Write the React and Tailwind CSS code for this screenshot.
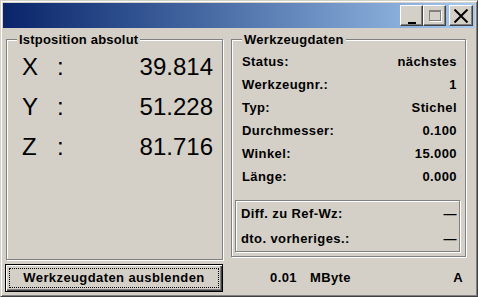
import React from "react";

const sans = "font-['Liberation_Sans',Arial,sans-serif]";

const achsen = [
  { name: "X", wert: "39.814" },
  { name: "Y", wert: "51.228" },
  { name: "Z", wert: "81.716" },
];

const werkzeug = [
  { label: "Status:", wert: "nächstes" },
  { label: "Werkzeugnr.:", wert: "1" },
  { label: "Typ:", wert: "Stichel" },
  { label: "Durchmesser:", wert: "0.100" },
  { label: "Winkel:", wert: "15.000" },
  { label: "Länge:", wert: "0.000" },
];

function TitleButton({ children, className = "" }) {
  return (
    <div
      className={`w-[23px] h-[21px] bg-[#d4d0c8] border border-t-white border-l-white border-r-[#404040] border-b-[#404040] shadow-[inset_-1px_-1px_0_#808080] flex items-center justify-center ${className}`}
    >
      {children}
    </div>
  );
}

export default function App() {
  return (
    <div
      className={`${sans} w-[478px] h-[297px] bg-[#d4d0c8] border border-t-[#d4d0c8] border-l-[#d4d0c8] border-r-[#404040] border-b-[#404040] shadow-[inset_1px_1px_0_#fff,inset_-1px_-1px_0_#808080] p-[2px] flex flex-col text-black`}
    >
      {/* Titelleiste */}
      <div className="h-[25px] bg-linear-to-r from-[#0a246a] to-[#a6caf0] flex items-center justify-end pr-[2px]">
        <TitleButton>
          <div className="w-[8px] h-[2px] bg-black mt-[14px]" />
        </TitleButton>
        <TitleButton>
          <div className="w-[12px] h-[11px] border border-[#808080] border-t-2 shadow-[1px_1px_0_#fff]" />
        </TitleButton>
        <TitleButton className="ml-[3px] w-[24px]">
          <svg width="16" height="14" viewBox="0 0 16 14">
            <path d="M1.5 0.5 L14.5 13.5 M14.5 0.5 L1.5 13.5" stroke="#000" strokeWidth="2" />
          </svg>
        </TitleButton>
      </div>

      <div className="flex gap-[8px] mt-[4px] px-[2px]">
        {/* linke Spalte */}
        <div className="w-[218px] flex flex-col">
          <fieldset className="ml-[1px] w-[217px] h-[228px] border border-[#808080] shadow-[inset_1px_1px_0_#fff,1px_1px_0_#fff]">
            <legend className="ml-[10px] px-[2px] text-[13px] leading-[15px] font-bold tracking-[0.2px] bg-[#d4d0c8]">
              Istposition absolut
            </legend>
            <div className="flex flex-col pl-[15px] pr-[9px]">
              {achsen.map((a) => (
                <div key={a.name} className="h-[40px] flex items-center text-[24px] leading-none">
                  <span className="w-[35px]">{a.name}</span>
                  <span>:</span>
                  <span className="ml-auto">{a.wert}</span>
                </div>
              ))}
            </div>
          </fieldset>
          <button className="mt-[4px] w-[218px] h-[28px] border border-black bg-[#d4d0c8] shadow-[inset_1px_1px_0_#fff,inset_-1px_-1px_0_#404040,inset_-2px_-2px_0_#808080] p-[3px]">
            <div className="h-full border border-dotted border-black flex items-center justify-center text-[13px] font-bold tracking-[0.4px]">
              Werkzeugdaten ausblenden
            </div>
          </button>
        </div>

        {/* rechte Spalte */}
        <div className="w-[235px] flex flex-col">
          <fieldset className="w-[235px] h-[225px] border border-[#808080] shadow-[inset_1px_1px_0_#fff,1px_1px_0_#fff]">
            <legend className="ml-[10px] px-[2px] text-[13px] leading-[15px] font-bold tracking-[0.3px] bg-[#d4d0c8]">
              Werkzeugdaten
            </legend>
            <div className="flex flex-col pt-[3px] pl-[10px] pr-[8px] text-[13px] font-bold tracking-[0.4px]">
              {werkzeug.map((w) => (
                <div key={w.label} className="h-[23px] flex items-center justify-between">
                  <span>{w.label}</span>
                  <span>{w.wert}</span>
                </div>
              ))}
            </div>
            <div className="mt-[12px] ml-[3px] mr-[5px] border border-[#808080] shadow-[inset_1px_1px_0_#fff,1px_1px_0_#fff] flex flex-col pl-[5px] pr-[2px] text-[13px] font-bold tracking-[0.4px]">
              <div className="h-[25px] flex items-center justify-between">
                <span>Diff. zu Ref-Wz:</span>
                <span>—</span>
              </div>
              <div className="h-[25px] flex items-center justify-between">
                <span>dto. vorheriges.:</span>
                <span>—</span>
              </div>
            </div>
          </fieldset>
          <div className="flex items-center h-[28px] mt-[7px] pl-[39px] pr-[3px] text-[13px] font-bold tracking-[0.4px]">
            <span>0.01</span>
            <span className="ml-[13px]">MByte</span>
            <span className="ml-auto">A</span>
          </div>
        </div>
      </div>
    </div>
  );
}
